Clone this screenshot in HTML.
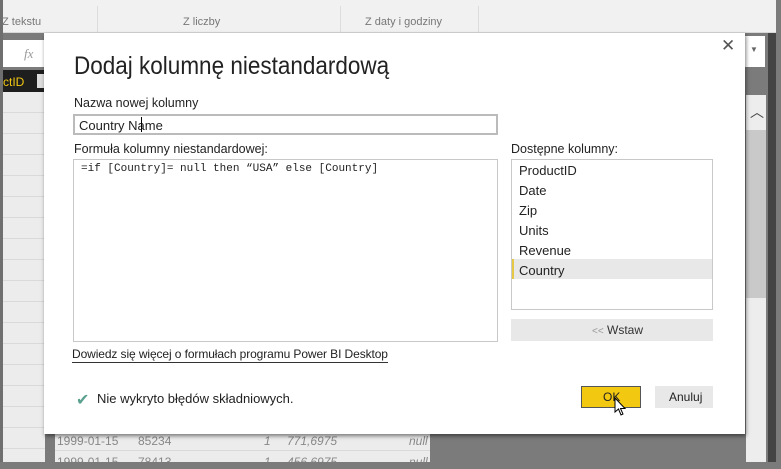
<!DOCTYPE html>
<html><head><meta charset="utf-8"><style>
*{margin:0;padding:0;box-sizing:border-box}
body{width:781px;height:467px;overflow:hidden;background:#7b7b7b;font-family:"Liberation Sans",sans-serif;position:relative}
.a{position:absolute}
.t{font-size:13px;color:#222;white-space:nowrap}
</style></head><body>
<div class="a" style="left:0;top:0;width:781px;height:33px;background:#f1f1f1;border-bottom:1px solid #d8d8d8"></div>
<div class="a" style="left:0;top:0;width:3px;height:467px;background:#6f6f6f"></div>
<div class="a t" style="left:2px;top:16px;font-size:11px;color:#777">Z tekstu</div>
<div class="a t" style="left:183px;top:16px;font-size:11px;color:#777">Z liczby</div>
<div class="a t" style="left:365px;top:16px;font-size:11px;color:#777">Z daty i godziny</div>
<div class="a" style="left:97px;top:6px;width:1px;height:26px;background:#ddd"></div>
<div class="a" style="left:340px;top:6px;width:1px;height:26px;background:#ddd"></div>
<div class="a" style="left:478px;top:6px;width:1px;height:26px;background:#ddd"></div>
<div class="a" style="left:3px;top:40px;width:42px;height:27px;background:#fff"></div>
<div class="a" style="left:24px;top:46px;font-style:italic;font-family:'Liberation Serif',serif;font-size:13px;color:#999">fx</div>
<div class="a" style="left:745px;top:36px;width:20px;height:31px;background:#fff"></div>
<div class="a" style="left:750px;top:45px;font-size:8px;color:#666">▼</div>
<div class="a" style="left:3px;top:70px;width:42px;height:22px;background:#1e1e1e"></div>
<div class="a t" style="left:3px;top:75px;color:#f2c811;font-size:12px">ctID</div>
<div class="a" style="left:37px;top:74px;width:8px;height:14px;background:#ddd"></div>
<div class="a" style="left:3px;top:92px;width:42px;height:370px;background:repeating-linear-gradient(#ececec 0 20px,#d9d9d9 20px 21px)"></div>
<div class="a" style="left:55px;top:430px;width:375px;height:32px;background:repeating-linear-gradient(#ececec 0 20px,#d9d9d9 20px 21px)"></div>
<div class="a t" style="left:57px;top:434px;font-size:12px;color:#888">1999-01-15</div>
<div class="a t" style="left:138px;top:434px;font-size:12px;color:#888">85234</div>
<div class="a t" style="left:264px;top:434px;font-size:12px;color:#888;font-style:italic">1</div>
<div class="a t" style="left:287px;top:434px;font-size:12px;color:#888;font-style:italic">771,6975</div>
<div class="a t" style="left:409px;top:434px;font-size:12px;color:#888;font-style:italic">null</div>
<div class="a t" style="left:57px;top:455px;font-size:12px;color:#888">1999-01-15</div>
<div class="a t" style="left:138px;top:455px;font-size:12px;color:#888">78413</div>
<div class="a t" style="left:264px;top:455px;font-size:12px;color:#888;font-style:italic">1</div>
<div class="a t" style="left:287px;top:455px;font-size:12px;color:#888;font-style:italic">456,6975</div>
<div class="a t" style="left:409px;top:455px;font-size:12px;color:#888;font-style:italic">null</div>
<div class="a" style="left:0;top:462px;width:781px;height:5px;background:#7b7b7b"></div>
<div class="a" style="left:746px;top:95px;width:20px;height:367px;background:#ededed"></div>
<div class="a" style="left:746px;top:130px;width:20px;height:168px;background:#c9c9c9"></div>
<div class="a" style="left:750px;top:102px;font-size:14px;color:#444">︿</div>
<div class="a" style="left:768px;top:33px;width:8px;height:429px;background:#444"></div>
<div class="a" style="left:776px;top:0;width:5px;height:467px;background:#7b7b7b"></div>
<div class="a" style="left:44px;top:33px;width:701px;height:401px;background:#fff;box-shadow:1px 2px 4px rgba(0,0,0,.5)"></div>
<div class="a" style="left:721px;top:36px;font-size:17px;color:#555">✕</div>
<div class="a" style="left:74px;top:52px;font-size:25px;color:#222;white-space:nowrap;font-weight:300;transform:scaleX(0.9);transform-origin:left">Dodaj kolumnę niestandardową</div>
<div class="a t" style="left:74px;top:96px;font-size:12.5px">Nazwa nowej kolumny</div>
<div class="a" style="left:73px;top:114px;width:425px;height:21px;border:2px solid #bbb"></div>
<div class="a t" style="left:79px;top:118px">Country Name</div>
<div class="a" style="left:141px;top:117px;width:1px;height:15px;background:#000"></div>
<div class="a t" style="left:74px;top:142px;font-size:12.5px">Formuła kolumny niestandardowej:</div>
<div class="a" style="left:73px;top:159px;width:425px;height:183px;border:1px solid #c8c8c8"></div>
<div class="a t" style="left:81px;top:163px;font-family:'Liberation Mono',monospace;font-size:11px">=if [Country]= null then “USA” else [Country]</div>
<div class="a t" style="left:511px;top:142px;font-size:12.5px">Dostępne kolumny:</div>
<div class="a" style="left:511px;top:159px;width:202px;height:151px;border:1px solid #c8c8c8"></div>
<div class="a" style="left:512px;top:259px;width:200px;height:20px;background:#e8e8e8"></div>
<div class="a" style="left:512px;top:259px;width:2px;height:20px;background:#e7c846"></div>
<div class="a t" style="left:519px;top:163px">ProductID</div>
<div class="a t" style="left:519px;top:183px">Date</div>
<div class="a t" style="left:519px;top:203px">Zip</div>
<div class="a t" style="left:519px;top:223px">Units</div>
<div class="a t" style="left:519px;top:243px">Revenue</div>
<div class="a t" style="left:519px;top:263px">Country</div>
<div class="a" style="left:511px;top:319px;width:202px;height:22px;background:#e8e8e8"></div>
<div class="a t" style="left:592px;top:323px;font-size:12px;color:#333"><span style="color:#999;font-size:10px">&lt;&lt;</span> Wstaw</div>
<div class="a t" style="left:72px;top:347px;font-size:12px;border-bottom:1px solid #333;line-height:15px;letter-spacing:-0.1px">Dowiedz się więcej o formułach programu Power BI Desktop</div>
<div class="a" style="left:76px;top:390px;font-size:16px;color:#5aa08e">✔</div>
<div class="a t" style="left:97px;top:391px">Nie wykryto błędów składniowych.</div>
<div class="a" style="left:581px;top:386px;width:60px;height:22px;background:#f2c811;border:1px solid #555"></div>
<div class="a t" style="left:603px;top:390px;font-size:12px">OK</div>
<div class="a" style="left:655px;top:386px;width:58px;height:22px;background:#e8e8e8"></div>
<div class="a t" style="left:669px;top:390px;font-size:12px">Anuluj</div>
<svg class="a" style="left:614px;top:397px" width="14" height="20" viewBox="0 0 14 20"><path d="M1 1 L1 15 L4.5 12 L7 18 L9 17 L6.5 11.5 L11 11.5 Z" fill="#fff" stroke="#000" stroke-width="1"/></svg>
</body></html>
